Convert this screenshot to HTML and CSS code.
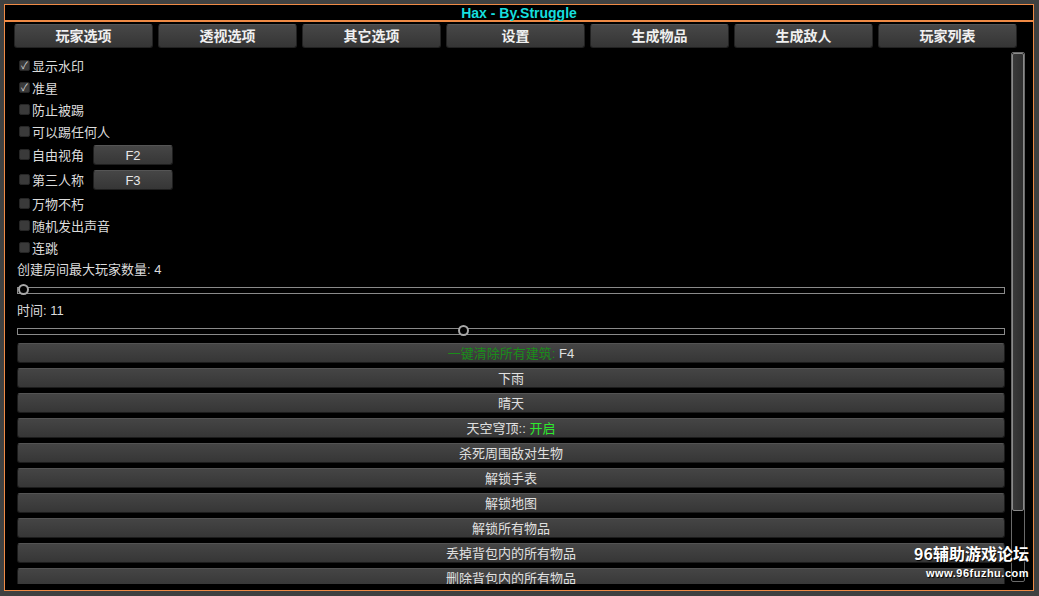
FILE: index.html
```html
<!DOCTYPE html>
<html lang="zh-CN">
<head>
    <meta charset="UTF-8">
    <title>Hax - By.Struggle</title>
    <link rel="stylesheet" href="styles.css">
</head>
<body>
    <div class="window">
        <div class="titlebar">Hax - By.Struggle</div>
        <div class="tabs">
            <div class="tab">玩家选项</div>
            <div class="tab">透视选项</div>
            <div class="tab">其它选项</div>
            <div class="tab">设置</div>
            <div class="tab">生成物品</div>
            <div class="tab">生成敌人</div>
            <div class="tab">玩家列表</div>
        </div>
        <div class="main">
            <div class="content">
                <div class="row"><span class="check checked">✓</span>显示水印</div>
                <div class="row"><span class="check checked">✓</span>准星</div>
                <div class="row"><span class="check"></span>防止被踢</div>
                <div class="row"><span class="check"></span>可以踢任何人</div>
                <div class="row row-key"><span class="check"></span>自由视角<div class="key">F2</div></div>
                <div class="row row-key"><span class="check"></span>第三人称<div class="key">F3</div></div>
                <div class="row"><span class="check"></span>万物不朽</div>
                <div class="row"><span class="check"></span>随机发出声音</div>
                <div class="row"><span class="check"></span>连跳</div>

                <div class="label">创建房间最大玩家数量: 4</div>
                <div class="slider"><div class="track"><span class="thumb" style="left: 0%;"></span></div></div>
                <div class="label">时间: 11</div>
                <div class="slider slider-last"><div class="track"><span class="thumb" style="left: calc((100% - 11px) * 0.451);"></span></div></div>

                <div class="actions">
                    <div class="btn"><span class="dim-green">一键清除所有建筑:</span> F4</div>
                    <div class="btn">下雨</div>
                    <div class="btn">晴天</div>
                    <div class="btn">天空穹顶:: <span class="on">开启</span></div>
                    <div class="btn">杀死周围敌对生物</div>
                    <div class="btn">解锁手表</div>
                    <div class="btn">解锁地图</div>
                    <div class="btn">解锁所有物品</div>
                    <div class="btn">丢掉背包内的所有物品</div>
                    <div class="btn">删除背包内的所有物品</div>
                </div>
            </div>
            <div class="scrollbar">
                <div class="scroll-thumb"></div>
            </div>
        </div>
    </div>
    <div class="watermark">
        <div class="wm-title">96辅助游戏论坛</div>
        <div class="wm-url">www.96fuzhu.com</div>
    </div>
</body>
</html>
```

FILE: styles.css
```css
body {
    margin: 0;
    width: 1039px;
    height: 596px;
    overflow: hidden;
    background: #3f4141;
    font-family: "Liberation Sans", "Noto Sans CJK SC", sans-serif;
    color: #dcdcdc;
    position: relative;
}
.window {
    box-sizing: border-box;
    margin: 4px 0 0 4px;
    width: 1030px;
    height: 587px;
    border: 1px solid #ef8a45;
    background: #000;
    display: flex;
    flex-direction: column;
}
.titlebar {
    height: 15px;
    line-height: 16px;
    border-bottom: 2px solid #ef8a45;
    text-align: center;
    color: #16dede;
    font-weight: bold;
    font-size: 14px;
}
.tabs {
    display: flex;
    gap: 5px;
    padding: 2px 0 0 9px;
}
.tab {
    box-sizing: border-box;
    width: 139px;
    height: 24px;
    line-height: 23px;
    text-align: center;
    font-size: 14px;
    font-weight: bold;
    color: #f0f0f0;
    background: linear-gradient(#474747, #353535);
    border: 1px solid #222;
    border-top-color: #555;
    border-radius: 3px;
}
.main {
    flex: 1;
    min-height: 0;
    display: flex;
    gap: 6px;
    padding: 4px 8px 6px 12px;
}
.content {
    width: 988px;
    overflow: hidden;
    padding-top: 2px;
    font-size: 13px;
}
.row {
    height: 22px;
    display: flex;
    align-items: center;
}
.row-key {
    height: 25px;
}
.check {
    box-sizing: border-box;
    width: 11px;
    height: 11px;
    margin: 0 2px 0 2px;
    background: #3a3a3a;
    border: 1px solid #262626;
    border-radius: 2px;
    color: #d8d8d8;
    font-size: 10px;
    line-height: 9px;
    text-align: center;
}
.key {
    box-sizing: border-box;
    width: 80px;
    height: 20px;
    margin-left: 9px;
    line-height: 19px;
    text-align: center;
    background: linear-gradient(#464646, #363636);
    border: 1px solid #1e1e1e;
    border-top-color: #555;
    border-radius: 3px;
    color: #e8e8e8;
}
.label {
    height: 22px;
    line-height: 22px;
    margin-top: 1px;
}
.slider {
    height: 18px;
    display: flex;
    align-items: center;
}
.slider-last {
    margin-bottom: 3px;
}
.track {
    position: relative;
    box-sizing: border-box;
    width: 100%;
    height: 7px;
    border: 1px solid #8a8a8a;
}
.thumb {
    position: absolute;
    top: -4px;
    box-sizing: border-box;
    width: 11px;
    height: 11px;
    border: 2px solid #a8a8a8;
    border-radius: 50%;
    background: #000;
}
.actions {
    display: flex;
    flex-direction: column;
    gap: 5px;
}
.btn {
    box-sizing: border-box;
    height: 20px;
    line-height: 19px;
    text-align: center;
    background: linear-gradient(#454545, #363636);
    border: 1px solid #1c1c1c;
    border-top-color: #545454;
    border-radius: 3px;
    color: #e0e0e0;
    flex-shrink: 0;
}
.dim-green {
    color: #1a8c1a;
}
.on {
    color: #2ee82e;
}
.scrollbar {
    box-sizing: border-box;
    width: 14px;
    margin-bottom: 2px;
    border: 1px solid #6a6a6a;
    border-radius: 2px;
    background: #000;
}
.scroll-thumb {
    box-sizing: border-box;
    height: 458px;
    background: linear-gradient(90deg, #3a3a3a, #2e2e2e);
    border: 1px solid #8a8a8a;
    border-radius: 2px;
}
.watermark {
    position: absolute;
    right: 10px;
    top: 543px;
    text-align: right;
    color: #fff;
    font-weight: bold;
    text-shadow: 1px 1px 1px #000;
}
.wm-title {
    font-size: 16px;
    line-height: 20px;
    font-family: "Noto Sans CJK SC", sans-serif;
}
.wm-url {
    margin-top: 4px;
    font-size: 11px;
    line-height: 12px;
    letter-spacing: 0.5px;
}
```
